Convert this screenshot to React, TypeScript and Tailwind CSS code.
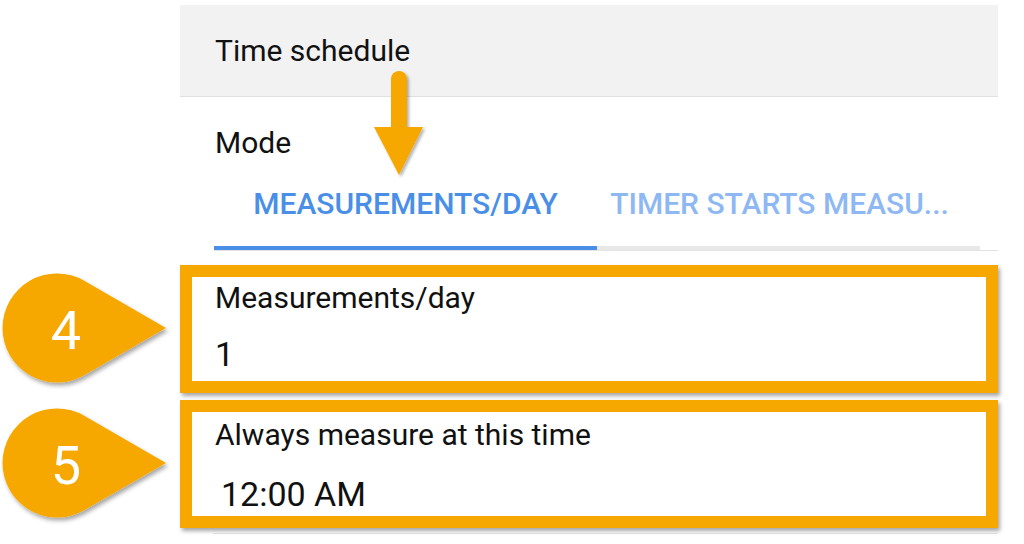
import React from "react";

const ORANGE = "#F6A800";

function Callout({ n }: { n: string }) {
  // circle center (57,63) r 54.5, tip at (166,63)
  const cx = 57, cy = 63, r = 54.5, tx = 166;
  const d = tx - cx;
  const a = Math.acos(r / d);
  const px = cx + r * Math.cos(a);
  const py1 = cy - r * Math.sin(a);
  const py2 = cy + r * Math.sin(a);
  const path = `M ${tx} ${cy} L ${px} ${py1} A ${r} ${r} 0 1 0 ${px} ${py2} Z`;
  return (
    <svg width="180" height="128" viewBox="0 0 180 128" className="shrink-0">
      <defs>
        <filter id={`sh${n}`} x="-20%" y="-20%" width="140%" height="140%">
          <feDropShadow dx="2" dy="3" stdDeviation="2" floodColor="#000" floodOpacity="0.35" />
        </filter>
      </defs>
      <path d={path} fill={ORANGE} filter={`url(#sh${n})`} />
      <text
        x="66"
        y="84"
        textAnchor="middle"
        fill="#ffffff"
        style={{ fontFamily: "Roboto, 'Liberation Sans', sans-serif", fontSize: 54 }}
      >
        {n}
      </text>
    </svg>
  );
}

export default function App() {
  return (
    <div
      className="relative w-[1024px] h-[544px] overflow-hidden bg-white pt-[5px] text-[#111111]"
      style={{ fontFamily: "Roboto, 'Liberation Sans', sans-serif" }}
    >
      {/* Header */}
      <div className="ml-[180px] w-[818px] h-[92px] bg-[#f2f2f2] border-b border-[#e0e0e0] pl-[35px] pt-[28px]">
        <div className="text-[30px] leading-[36px]">Time schedule</div>
      </div>

      {/* Mode */}
      <div className="ml-[180px] w-[818px] pl-[35px] pt-[28px]">
        <div className="text-[30px] leading-[36px]">Mode</div>
      </div>

      {/* Tabs */}
      <div className="ml-[214px] w-[784px] mt-[25px] border-b border-[#e3e3e3]">
        <div className="flex w-[766px]">
          <div className="w-[383px] flex flex-col">
            <div className="flex justify-center text-[30px] leading-[36px] font-medium text-[#4a8fe7] pb-[24px]">
              MEASUREMENTS/DAY
            </div>
            <div className="h-[4px] bg-[#4a8fe7]" />
          </div>
          <div className="w-[383px] flex flex-col">
            <div className="flex justify-center pr-[18px] text-[30px] leading-[36px] font-medium text-[#8db8f3] pb-[24px] whitespace-nowrap">
              TIMER STARTS MEASU...
            </div>
            <div className="h-[4px] bg-[#e8e8e8]" />
          </div>
        </div>
      </div>

      {/* Box 4 */}
      <div className="flex mt-[14px]">
        <Callout n="4" />
        <div className="w-[818px] h-[128px] border-[12px] border-[#F6A800] bg-white shadow-[2px_3px_4px_rgba(0,0,0,0.35)] pl-[23px] pt-[3px]">
          <div className="text-[30px] leading-[36px]">Measurements/day</div>
          <div className="text-[34px] leading-[40px] mt-[18px]">1</div>
        </div>
      </div>

      {/* Box 5 */}
      <div className="flex mt-[7px]">
        <Callout n="5" />
        <div className="w-[818px] h-[128px] border-[12px] border-[#F6A800] bg-white shadow-[2px_3px_4px_rgba(0,0,0,0.35)] pl-[23px] pt-[5px]">
          <div className="text-[30px] leading-[36px]">Always measure at this time</div>
          <div className="text-[34px] leading-[40px] mt-[21px] pl-[6px]">12:00 AM</div>
        </div>
      </div>

      <div className="ml-[213px] w-[785px] h-px bg-[#e6e6e6] mt-[5px]" />

      {/* Arrow annotation */}
      <svg
        className="absolute left-[368px] top-[66px]"
        width="64"
        height="116"
        viewBox="0 0 64 116"
      >
        <defs>
          <filter id="ash" x="-30%" y="-20%" width="160%" height="140%">
            <feDropShadow dx="2" dy="2" stdDeviation="1.5" floodColor="#000" floodOpacity="0.3" />
          </filter>
        </defs>
        <g filter="url(#ash)">
          <path d="M 23 61 L 23 13 A 8 8 0 0 1 39 13 L 39 61 Z" fill={ORANGE} />
          <path d="M 6 61 L 55 61 L 31 109 Z" fill={ORANGE} />
        </g>
      </svg>
    </div>
  );
}
